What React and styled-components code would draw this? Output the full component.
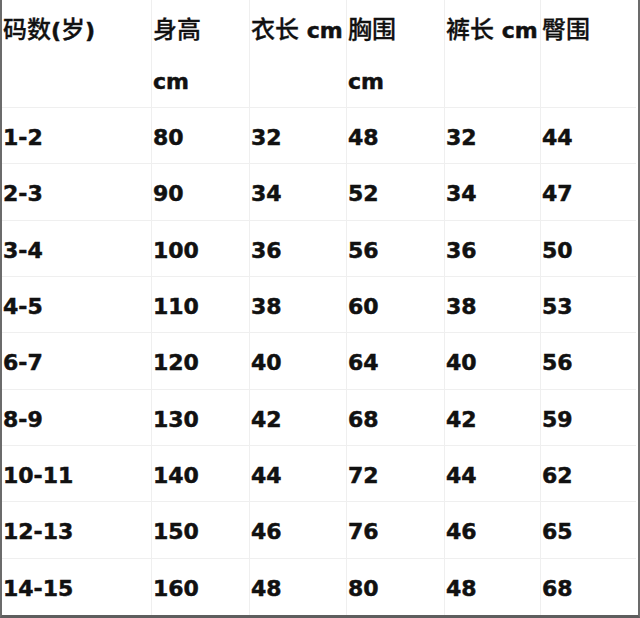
import React from 'react';
import styled, { createGlobalStyle } from 'styled-components';

const GlobalStyle = createGlobalStyle`
  html, body {
    margin: 0;
    padding: 0;
    background: #ffffff;
  }
  * {
    box-sizing: border-box;
  }
`;

const Sheet = styled.div`
  width: 640px;
  height: 618px;
  background: #fff;
  border-left: 2px solid #6b6b6b;
  border-right: 2px solid #6b6b6b;
  border-bottom: 3px solid #5e5e5e;
  display: grid;
  grid-template-columns: 150px 98px 97px 98px 96px 95px;
  grid-template-rows: 108px repeat(9, 1fr);
  font-family: "DejaVu Sans", "Noto Sans CJK SC", sans-serif;
  font-weight: 700;
  font-size: 22px;
  color: #111;
  -webkit-text-stroke: 0.5px #111;
`;

const Cell = styled.div`
  border-right: ${(p) => (p.$last ? 'none' : '1px solid #efefef')};
  border-bottom: ${(p) => (p.$bottom ? 'none' : '1px solid #efefef')};
  padding-left: 1px;
  padding-top: ${(p) => (p.$head ? '0' : '4px')};
  display: flex;
  flex-direction: column;
  justify-content: center;
  white-space: nowrap;
`;

const HeadLine = styled.div`
  height: 54px;
  line-height: 54px;
  padding-top: 1px;
`;

const Cjk = styled.span`
  font-family: "Noto Sans CJK SC", sans-serif;
  font-weight: 500;
  font-size: 24px;
  -webkit-text-stroke: 0.3px #111;
`;

const HEADERS = [
  [<><Cjk>码数</Cjk>(<Cjk>岁</Cjk>)</>, ''],
  [<Cjk>身高</Cjk>, 'cm'],
  [<><Cjk>衣长</Cjk> cm</>, ''],
  [<Cjk>胸围</Cjk>, 'cm'],
  [<><Cjk>裤长</Cjk> cm</>, ''],
  [<Cjk>臀围</Cjk>, ''],
];

const ROWS = [
  ['1-2', '80', '32', '48', '32', '44'],
  ['2-3', '90', '34', '52', '34', '47'],
  ['3-4', '100', '36', '56', '36', '50'],
  ['4-5', '110', '38', '60', '38', '53'],
  ['6-7', '120', '40', '64', '40', '56'],
  ['8-9', '130', '42', '68', '42', '59'],
  ['10-11', '140', '44', '72', '44', '62'],
  ['12-13', '150', '46', '76', '46', '65'],
  ['14-15', '160', '48', '80', '48', '68'],
];

export default function App() {
  return (
    <>
      <GlobalStyle />
      <Sheet>
        {HEADERS.map(([top, bottom], i) => (
          <Cell key={'h' + i} $head $last={i === 5}>
            <HeadLine>{top}</HeadLine>
            <HeadLine>{bottom}</HeadLine>
          </Cell>
        ))}
        {ROWS.map((row, r) =>
          row.map((val, c) => (
            <Cell key={r + '-' + c} $last={c === 5} $bottom={r === ROWS.length - 1}>
              {val}
            </Cell>
          ))
        )}
      </Sheet>
    </>
  );
}
